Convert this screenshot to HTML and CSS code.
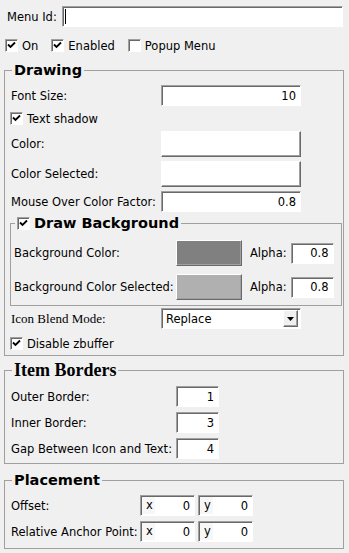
FILE: index.html
```html
<!DOCTYPE html>
<html lang="en">
<head>
    <meta charset="UTF-8">
    <meta name="viewport" content="width=device-width, initial-scale=1.0">
    <title>Menu Item Properties</title>
    <link rel="stylesheet" href="styles.css">
</head>
<body>
    <div class="panel">
        <div class="top-row">
            <label class="top-label">Menu Id:</label>
            <div class="field-wrap">
                <input class="field menu-id" type="text" value="">
                <span class="caret"></span>
            </div>
        </div>

        <div class="check-row">
            <label class="check"><span class="box"><svg viewBox="0 0 11 11"><path d="M2 4.5 L4.5 7 L9 2.5" /></svg></span>On</label>
            <label class="check"><span class="box"><svg viewBox="0 0 11 11"><path d="M2 4.5 L4.5 7 L9 2.5" /></svg></span>Enabled</label>
            <label class="check"><span class="box"></span>Popup Menu</label>
        </div>

        <!-- Drawing -->
        <fieldset class="group drawing">
            <legend class="title">Drawing</legend>
            <div class="row r-font">
                <span class="lbl">Font Size:</span>
                <input class="field num wide" type="text" value="10">
            </div>
            <label class="check r-shadow"><span class="box"><svg viewBox="0 0 11 11"><path d="M2 4.5 L4.5 7 L9 2.5" /></svg></span>Text shadow</label>
            <div class="row r-color">
                <span class="lbl">Color:</span>
                <button class="swatch wide white"></button>
            </div>
            <div class="row r-gap">
                <span class="lbl">Color Selected:</span>
                <button class="swatch wide white"></button>
            </div>
            <div class="row r-gap">
                <span class="lbl">Mouse Over Color Factor:</span>
                <input class="field num wide" type="text" value="0.8">
            </div>

            <fieldset class="group background">
                <legend class="title sub">
                    <label class="check"><span class="box"><svg viewBox="0 0 11 11"><path d="M2 4.5 L4.5 7 L9 2.5" /></svg></span>Draw Background</label>
                </legend>
                <div class="bg-row">
                    <span class="lbl">Background Color:</span>
                    <button class="swatch small dark"></button>
                    <span class="alpha">Alpha:</span>
                    <input class="field num tiny" type="text" value="0.8">
                </div>
                <div class="bg-row">
                    <span class="lbl">Background Color Selected:</span>
                    <button class="swatch small light"></button>
                    <span class="alpha">Alpha:</span>
                    <input class="field num tiny" type="text" value="0.8">
                </div>
            </fieldset>

            <div class="row r-blend">
                <span class="lbl serif">Icon Blend Mode:</span>
                <div class="select wide">
                    <span class="select-text">Replace</span>
                    <span class="select-btn"><svg viewBox="0 0 7 4"><path d="M0 0 H7 L3.5 4 Z" /></svg></span>
                </div>
            </div>
            <label class="check r-zbuf"><span class="box"><svg viewBox="0 0 11 11"><path d="M2 4.5 L4.5 7 L9 2.5" /></svg></span>Disable zbuffer</label>
        </fieldset>

        <!-- Item Borders -->
        <fieldset class="group borders">
            <legend class="title serif-title">Item Borders</legend>
            <div class="row r-first">
                <span class="lbl lbl-long">Outer Border:</span>
                <input class="field num tiny" type="text" value="1">
            </div>
            <div class="row r-next">
                <span class="lbl lbl-long">Inner Border:</span>
                <input class="field num tiny" type="text" value="3">
            </div>
            <div class="row r-next">
                <span class="lbl lbl-long">Gap Between Icon and Text:</span>
                <input class="field num tiny" type="text" value="4">
            </div>
        </fieldset>

        <!-- Placement -->
        <fieldset class="group placement">
            <legend class="title">Placement</legend>
            <div class="row r-first">
                <span class="lbl lbl-short">Offset:</span>
                <div class="xy"><span class="axis">x</span><input type="text" value="0"></div>
                <div class="xy"><span class="axis">y</span><input type="text" value="0"></div>
            </div>
            <div class="row r-next">
                <span class="lbl lbl-short">Relative Anchor Point:</span>
                <div class="xy"><span class="axis">x</span><input type="text" value="0"></div>
                <div class="xy"><span class="axis">y</span><input type="text" value="0"></div>
            </div>
        </fieldset>
    </div>
</body>
</html>
```

FILE: styles.css
```css
* {
    box-sizing: border-box;
}

body {
    margin: 0;
    background: #f0f0f0;
    color: #000;
    font-family: "DejaVu Sans", Verdana, sans-serif;
    font-size: 11.5px;
}

.panel {
    padding: 6px 5px 0 4px;
}

/* top line */
.top-row {
    display: flex;
    align-items: center;
    height: 21px;
}

.top-label {
    width: 58px;
    padding-left: 3px;
}

.field-wrap {
    position: relative;
}

.caret {
    position: absolute;
    left: 3px;
    top: 3px;
    width: 1px;
    height: 15px;
    background: #000;
}

.check-row {
    display: flex;
    margin-top: 12px;
    padding-left: 1px;
    gap: 13px;
}

/* checkbox */
.check {
    display: flex;
    align-items: center;
    gap: 4px;
    height: 13px;
}

.box {
    display: inline-block;
    width: 13px;
    height: 13px;
    background: #fff;
    border: 1px solid;
    border-color: #a0a0a0 #fff #fff #a0a0a0;
    box-shadow: inset 1px 1px #696969;
}

.box svg {
    display: block;
    width: 11px;
    height: 11px;
}

.box path {
    fill: none;
    stroke: #000;
    stroke-width: 1.8;
}

/* text fields */
.field {
    height: 21px;
    margin: 0;
    padding: 0 4px;
    font: inherit;
    color: #000;
    background: #fff;
    border: 1px solid;
    border-color: #a0a0a0 #fff #fff #a0a0a0;
    box-shadow: inset 1px 1px #696969;
    outline: none;
}

.menu-id {
    width: 281px;
}

.num {
    text-align: right;
}

.wide {
    width: 140px;
}

.tiny {
    width: 43px;
}

/* colour buttons */
.swatch {
    height: 26px;
    padding: 0;
    border: 1px solid;
    border-color: #fff #696969 #696969 #fff;
    box-shadow: inset -1px -1px #a0a0a0;
}

.swatch.white {
    background: #fff;
}

.swatch.dark {
    background: #808080;
}

.swatch.light {
    background: #b0b0b0;
}

.swatch.small {
    width: 66px;
}

/* group boxes */
.group {
    margin: 0;
    padding: 0 5px;
    border: 1px solid #a0a0a0;
    min-width: 0;
}

.title {
    height: 18px;
    line-height: 18px;
    margin-left: 2px;
    padding: 0 2px;
    font-weight: bold;
    font-size: 14.5px;
}

.serif-title {
    font-family: "Liberation Serif", "Times New Roman", serif;
    font-size: 18px;
}

.drawing {
    margin-top: 9px;
    padding: 0 3px 5px 5px;
}

.borders {
    margin-top: 5px;
    padding-bottom: 4px;
}

.placement {
    margin-top: 7px;
    padding-bottom: 6px;
}

.row {
    display: flex;
    align-items: center;
}

.lbl {
    width: 151px;
    padding-left: 1px;
}

.lbl-long {
    width: 166px;
}

.lbl-short {
    width: 130px;
}

.serif {
    font-family: "Liberation Serif", "Times New Roman", serif;
    font-size: 13px;
}

.r-font {
    margin-top: 6px;
}

.r-shadow {
    margin-top: 6px;
}

.r-color {
    margin-top: 6px;
}

.r-gap {
    margin-top: 4px;
}

.r-blend {
    margin-top: 2px;
}

.r-zbuf {
    margin-top: 8px;
}

.r-first {
    margin-top: 7px;
}

.r-next {
    margin-top: 5px;
}

.placement .r-first {
    margin-top: 6px;
}

/* Draw Background */
.background {
    margin: 2px -2px 0 0;
    padding: 0 2px 5px 2px;
}

.title.sub {
    margin-left: 2px;
}

.title.sub .check {
    height: 18px;
}

.bg-row {
    display: flex;
    align-items: center;
    height: 26px;
    margin-top: 8px;
}

.bg-row .lbl {
    width: 163px;
}

.alpha {
    margin: 0 4px 0 8px;
}

/* drop down */
.select {
    display: flex;
    align-items: center;
    justify-content: space-between;
    height: 21px;
    padding: 2px 2px 2px 4px;
    background: #fff;
    border: 1px solid;
    border-color: #a0a0a0 #fff #fff #a0a0a0;
    box-shadow: inset 1px 1px #696969;
}

.select-btn {
    display: flex;
    align-items: center;
    justify-content: center;
    width: 15px;
    height: 17px;
    background: #f0f0f0;
    border: 1px solid;
    border-color: #fff #696969 #696969 #fff;
    box-shadow: inset -1px -1px #a0a0a0;
}

.select-btn svg {
    width: 7px;
    height: 4px;
}

/* x / y pairs */
.xy {
    display: flex;
    align-items: center;
    width: 55px;
    height: 21px;
    margin-right: 3px;
    background: #fff;
    border: 1px solid;
    border-color: #a0a0a0 #fff #fff #a0a0a0;
    box-shadow: inset 1px 1px #696969;
}

.axis {
    width: 13px;
    height: 17px;
    line-height: 17px;
    margin-left: 1px;
    padding-left: 4px;
    background: #f7f7f7;
}

.xy input {
    flex: 1;
    width: 0;
    height: 17px;
    padding: 0 4px 0 0;
    font: inherit;
    text-align: right;
    border: none;
    outline: none;
    background: #fff;
}
```
